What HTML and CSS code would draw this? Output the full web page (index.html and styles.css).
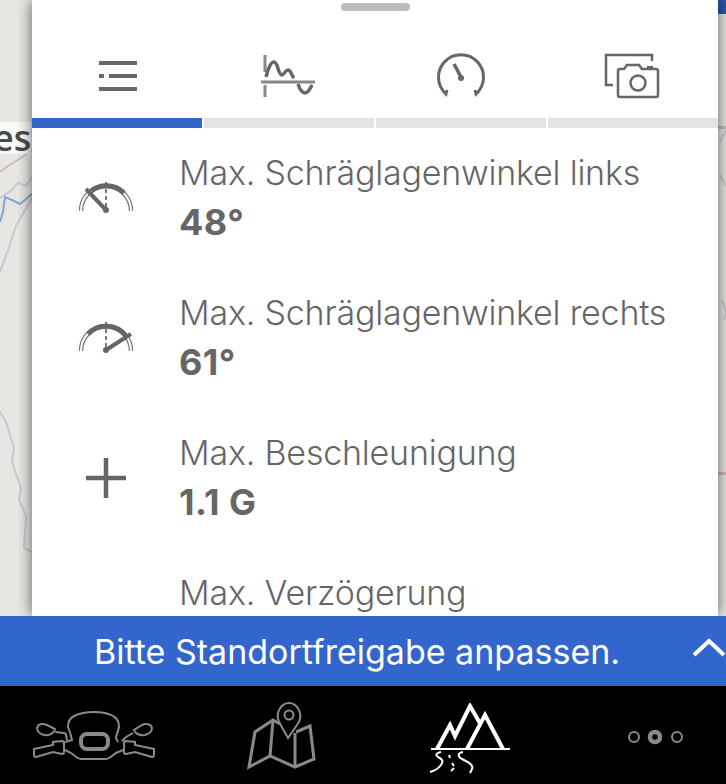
FILE: index.html
```html
<!DOCTYPE html>
<html lang="de">
<head>
    <meta charset="UTF-8">
    <meta name="viewport" content="width=device-width, initial-scale=1.0">
    <title>Tour Details</title>
    <link rel="stylesheet" href="styles.css">
</head>
<body>
    <div class="app">

        <!-- Karte hinter dem Panel -->
        <svg class="map" width="726" height="616" viewBox="0 0 726 616">
            <path class="road-red" d="M0 172 L8 166 L18 160 L32 150"/>
            <path class="road" d="M0 198 L12 190 L18 183 L26 186 L32 177"/>
            <path class="road" d="M32 198 L16 226 L8 250 L0 272"/>
            <path class="river" d="M0 222 L3 212 L5 197 L12 200 L20 204 L26 199 L32 194"/>
            <path class="road" d="M0 412 L6 422 L14 448 L12 462 L21 488 L19 500 L26 516 L24 548 L32 552"/>
            <path class="road" d="M726 130 L720 142 M720 175 L726 186 M722 300 L726 312 L724 320"/>
            <rect class="edge-blue" x="718" y="0" width="8" height="14"/>
            <rect class="edge-red" x="718" y="126" width="8" height="3"/>
            <rect class="edge-red" x="718" y="472" width="8" height="3"/>
        </svg>
        <div class="map-label">es</div>

        <div class="sheet">
            <div class="handle"></div>

            <div class="tabs">
                <div class="tab">
                    <svg width="40" height="32" viewBox="0 0 40 32">
                        <path class="icon-thick" d="M1 3 H39 M1 16 H6 M11 16 H39 M1 29 H39"/>
                    </svg>
                </div>
                <div class="tab">
                    <svg width="56" height="42" viewBox="0 0 56 42">
                        <path class="icon-axis" d="M4 0 V17 M4 30 V42 M0 27 H54"/>
                        <path class="icon-line" d="M5 22 C7 14 10 7 13 7 C17 7 17 20 21 20 C23 20 24 15 27 15 C30 15 30 20 33 23 M37 29 C39 35 41 38 44 38 C47 38 49 34 51 30"/>
                    </svg>
                </div>
                <div class="tab">
                    <svg width="50" height="46" viewBox="0 0 50 46">
                        <path class="icon-med-3" d="M10 41 A22.5 22.5 0 1 1 40 41 M7 38 L10 41 L11 37 M43 38 L40 41 L39 37"/>
                        <path class="icon-line" d="M18 11 L25 24"/>
                        <circle class="icon-fill" cx="25" cy="25" r="3"/>
                    </svg>
                </div>
                <div class="tab">
                    <svg width="58" height="46" viewBox="0 0 58 46">
                        <path class="icon-med" d="M49 8 V2 H3 V32 H10"/>
                        <path class="icon-med" d="M15 18 Q15 16 17 16 H21 L24 12 H36 L39 16 H53 Q55 16 55 18 V42 Q55 44 53 44 H17 Q15 44 15 42 Z"/>
                        <circle class="icon-med" cx="35" cy="30" r="7.5"/>
                        <rect class="icon-fill" x="44" y="13" width="6" height="3"/>
                    </svg>
                </div>
            </div>

            <div class="tab-bars">
                <div class="tab-bar tab-bar-active"></div>
                <div class="tab-bar"></div>
                <div class="tab-bar"></div>
                <div class="tab-bar"></div>
            </div>

            <div class="rows">
                <div class="row">
                    <div class="row-icon">
                        <svg width="54" height="34" viewBox="0 0 54 34">
                            <path class="gauge-rim" d="M2 30 A25 25 0 0 1 52 30"/>
                            <path class="gauge-rim-inner" d="M2 30 A25 25 0 0 1 52 30"/>
                            <path class="gauge-dots" d="M27 1 V28"/>
                            <path class="gauge-arc" d="M12 10 A25 25 0 0 1 45 12"/>
                            <path class="gauge-needle" d="M7 8 L27 29"/>
                            <circle class="icon-fill" cx="27" cy="29" r="3"/>
                        </svg>
                    </div>
                    <div class="row-text">
                        <div class="row-label">Max. Schräglagenwinkel links</div>
                        <div class="row-value">48°</div>
                    </div>
                </div>
                <div class="row">
                    <div class="row-icon">
                        <svg width="54" height="34" viewBox="0 0 54 34">
                            <path class="gauge-rim" d="M2 30 A25 25 0 0 1 52 30"/>
                            <path class="gauge-rim-inner" d="M2 30 A25 25 0 0 1 52 30"/>
                            <path class="gauge-dots" d="M27 1 V28"/>
                            <path class="gauge-arc" d="M9 13 A25 25 0 0 1 47 15"/>
                            <path class="gauge-needle" d="M27 29 L52 13"/>
                            <circle class="icon-fill" cx="27" cy="29" r="3"/>
                        </svg>
                    </div>
                    <div class="row-text">
                        <div class="row-label">Max. Schräglagenwinkel rechts</div>
                        <div class="row-value">61°</div>
                    </div>
                </div>
                <div class="row">
                    <div class="row-icon">
                        <svg width="40" height="40" viewBox="0 0 40 40">
                            <path class="icon-plus" d="M0 20 H40 M20 0 V40"/>
                        </svg>
                    </div>
                    <div class="row-text">
                        <div class="row-label">Max. Beschleunigung</div>
                        <div class="row-value">1.1 G</div>
                    </div>
                </div>
                <div class="row">
                    <div class="row-icon"></div>
                    <div class="row-text">
                        <div class="row-label">Max. Verzögerung</div>
                    </div>
                </div>
            </div>
        </div>

        <div class="banner">
            <span class="banner-text">Bitte Standortfreigabe anpassen.</span>
            <svg class="banner-arrow" width="34" height="20" viewBox="0 0 34 20">
                <path d="M2 17 L17 3 L32 17"/>
            </svg>
        </div>

        <div class="nav">
            <svg class="nav-bike" width="124" height="50" viewBox="32 30 124 50">
                <path class="nav-thin" d="M65 70 L71 73 C74 75 77 79 81 79 H106 C110 79 113 75 116 73 L123 70 M118 62 L116 58 C116 55 118 52 119 47 C119 42 117 38 113 36 C108 33 101 32 94 32 C87 32 80 33 74 36 C70 38 68 42 68 47 C70 52 71 55 72 60 L65 62"/>
                <rect class="nav-med" x="81" y="54" width="27" height="15" rx="6"/>
                <path class="nav-thin" d="M34 69 L53 65 V62 L62 61 Q64 61 64 63 V72 Q64 74 62 74 L53 72 L36 77 Q34 77 34 75 Z"/>
                <path class="nav-thin" d="M154 69 L135 65 V62 L126 61 Q124 61 124 63 V72 Q124 74 126 74 L135 72 L152 77 Q154 77 154 75 Z"/>
                <path class="nav-thin" d="M37 48 C38 44 42 43 47 45 L55 49 C54 53 50 56 44 55 C40 54 37 51 37 48 Z M55 52 L64 53 Q66 53 66 55 L67 60"/>
                <path class="nav-thin" d="M152 48 C151 44 146 43 142 45 L134 50 C135 53 139 56 145 55 C149 54 152 51 152 48 Z M133 53 L126 57 L122 61"/>
            </svg>
            <svg class="nav-map" width="72" height="68" viewBox="246 22 72 68">
                <path class="nav-map-line" d="M280 44 L273 40 L255 52 L249 87 L270 76 L295 87 L314 79 L310 46 L296 52"/>
                <path class="nav-map-line" d="M273 40 L270 76 M295 53 V87"/>
                <path class="nav-thin" d="M288 58 L279 42 C275 33 281 23 289 23 C297 23 303 33 299 42 Z"/>
                <circle class="nav-thin" cx="289" cy="35" r="4.5"/>
            </svg>
            <svg class="nav-trips" width="83" height="72" viewBox="429 703 83 72">
                <path class="trip-peak" d="M437 749 L450 725 L455 736 L470 706 L481 725 M467 749 L485 715 L503 749"/>
                <path class="trip-base" d="M431 749 H510"/>
                <path class="trip-road" d="M441 752 C436 753 435 755 438 757 C442 759 444 761 441 765 C438 769 434 771 430 772 M463 752 C458 753 457 756 462 759 C468 762 474 765 472 769 L470 773"/>
                <path class="trip-road" d="M449 755 L450 758 M452 763 L454 766 M454 768 L451 771"/>
            </svg>
            <svg class="nav-more" width="58" height="16" viewBox="627 729 58 16">
                <circle class="dot" cx="634" cy="737" r="5"/>
                <circle class="dot dot-active" cx="655" cy="737" r="5"/>
                <circle class="dot" cx="677" cy="737" r="5"/>
            </svg>
        </div>
    </div>
</body>
</html>
```

FILE: styles.css
```css
body {
    margin: 0;
    font-family: Inter, "Liberation Sans", sans-serif;
    background-color: #000;
}

.app {
    position: relative;
    display: flex;
    flex-direction: column;
    width: 726px;
    height: 784px;
    overflow: hidden;
    background-color: #e6e7e2;
}

/* Karte */
.map {
    position: absolute;
    top: 0;
    left: 0;
}

.map path {
    fill: none;
    stroke-width: 2;
}

.road {
    stroke: #c6c9cf;
}

.road-red {
    stroke: #cdbcb8;
}

.river {
    stroke: #82a6d6;
}

.edge-blue {
    fill: #2d55a8;
}

.edge-red {
    fill: #c9b9b6;
}

.map-label {
    position: absolute;
    top: 122px;
    left: -7px;
    font-family: "Open Sans", sans-serif;
    font-size: 36px;
    font-weight: 600;
    line-height: 32px;
    color: #4a4a4a;
    background-color: rgba(255, 255, 255, 0.7);
}

/* Panel */
.sheet {
    position: relative;
    flex: 1;
    min-height: 0;
    margin: 0 8px 0 32px;
    background-color: #fff;
    box-shadow: 0 0 14px rgba(0, 0, 0, 0.6);
    clip-path: inset(0 -14px 0 -14px);
}

.handle {
    position: absolute;
    top: 3px;
    left: 309px;
    width: 69px;
    height: 8px;
    border-radius: 4px;
    background-color: #bdbdbd;
}

.tabs {
    display: flex;
    height: 118px;
}

.tab {
    flex: 1;
    display: flex;
    align-items: center;
    justify-content: center;
    padding-top: 34px;
    box-sizing: border-box;
}

.tab-bars {
    display: flex;
    gap: 2px;
}

.tab-bar {
    flex: 1;
    height: 10px;
    background-color: #e3e3e3;
}

.tab-bar-active {
    background-color: #3366cc;
}

.row {
    display: flex;
    height: 140px;
    box-sizing: border-box;
}

.row-icon {
    display: flex;
    align-items: center;
    justify-content: center;
    flex: none;
    width: 147px;
    box-sizing: border-box;
}

.row-text {
    padding-top: 23px;
    color: #666;
}

.row-label {
    font-size: 34px;
    font-weight: 300;
    line-height: 44px;
    letter-spacing: -0.2px;
    white-space: nowrap;
}

.row-value {
    font-size: 36px;
    font-weight: 700;
    line-height: 54px;
    letter-spacing: 0.4px;
}

/* Icons */
.icon-thick {
    fill: none;
    stroke: #666;
    stroke-width: 4;
}

.icon-line {
    fill: none;
    stroke: #666;
    stroke-width: 3.5;
}

.icon-med {
    fill: none;
    stroke: #666;
    stroke-width: 2.5;
}

.icon-med-3 {
    fill: none;
    stroke: #666;
    stroke-width: 3;
}

.icon-axis {
    fill: none;
    stroke: #888;
    stroke-width: 3;
}

.icon-fill {
    fill: #666;
}

.icon-plus {
    fill: none;
    stroke: #666;
    stroke-width: 4.5;
}

.gauge-rim {
    fill: none;
    stroke: #777;
    stroke-width: 4.5;
}

.gauge-rim-inner {
    fill: none;
    stroke: #fff;
    stroke-width: 2;
}

.gauge-dots {
    fill: none;
    stroke: #777;
    stroke-width: 2;
    stroke-dasharray: 4 3;
}

.gauge-arc {
    fill: none;
    stroke: #666;
    stroke-width: 5;
}

.gauge-needle {
    fill: none;
    stroke: #666;
    stroke-width: 4;
}

/* Hinweis */
.banner {
    position: relative;
    flex: none;
    display: flex;
    align-items: center;
    justify-content: space-between;
    height: 70px;
    padding: 0 0 0 94px;
    background-color: #3366cc;
    color: #fff;
}

.banner-text {
    font-size: 34px;
    font-weight: 400;
    white-space: nowrap;
}

.banner-arrow {
    margin-top: -6px;
    fill: none;
    stroke: #fff;
    stroke-width: 4;
}

/* Navigation */
.nav {
    flex: none;
    display: flex;
    align-items: flex-start;
    height: 98px;
    background-color: #000;
}

.nav-bike {
    margin: 24px 0 0 32px;
}

.nav-map {
    margin: 16px 0 0 90px;
}

.nav-trips {
    margin: 17px 0 0 111px;
}

.nav-more {
    margin: 43px 0 0 115px;
}

.nav-thin {
    fill: none;
    stroke: #8a8a8a;
    stroke-width: 2;
}

.nav-med {
    fill: none;
    stroke: #8a8a8a;
    stroke-width: 4;
}

.nav-map-line {
    fill: none;
    stroke: #8a8a8a;
    stroke-width: 3;
}

.trip-peak {
    fill: none;
    stroke: #fff;
    stroke-width: 4;
}

.trip-base {
    fill: none;
    stroke: #fff;
    stroke-width: 2;
}

.trip-road {
    fill: none;
    stroke: #fff;
    stroke-width: 2;
}

.dot {
    fill: none;
    stroke: #8a8a8a;
    stroke-width: 2;
}

.dot-active {
    stroke-width: 4.5;
}
```
